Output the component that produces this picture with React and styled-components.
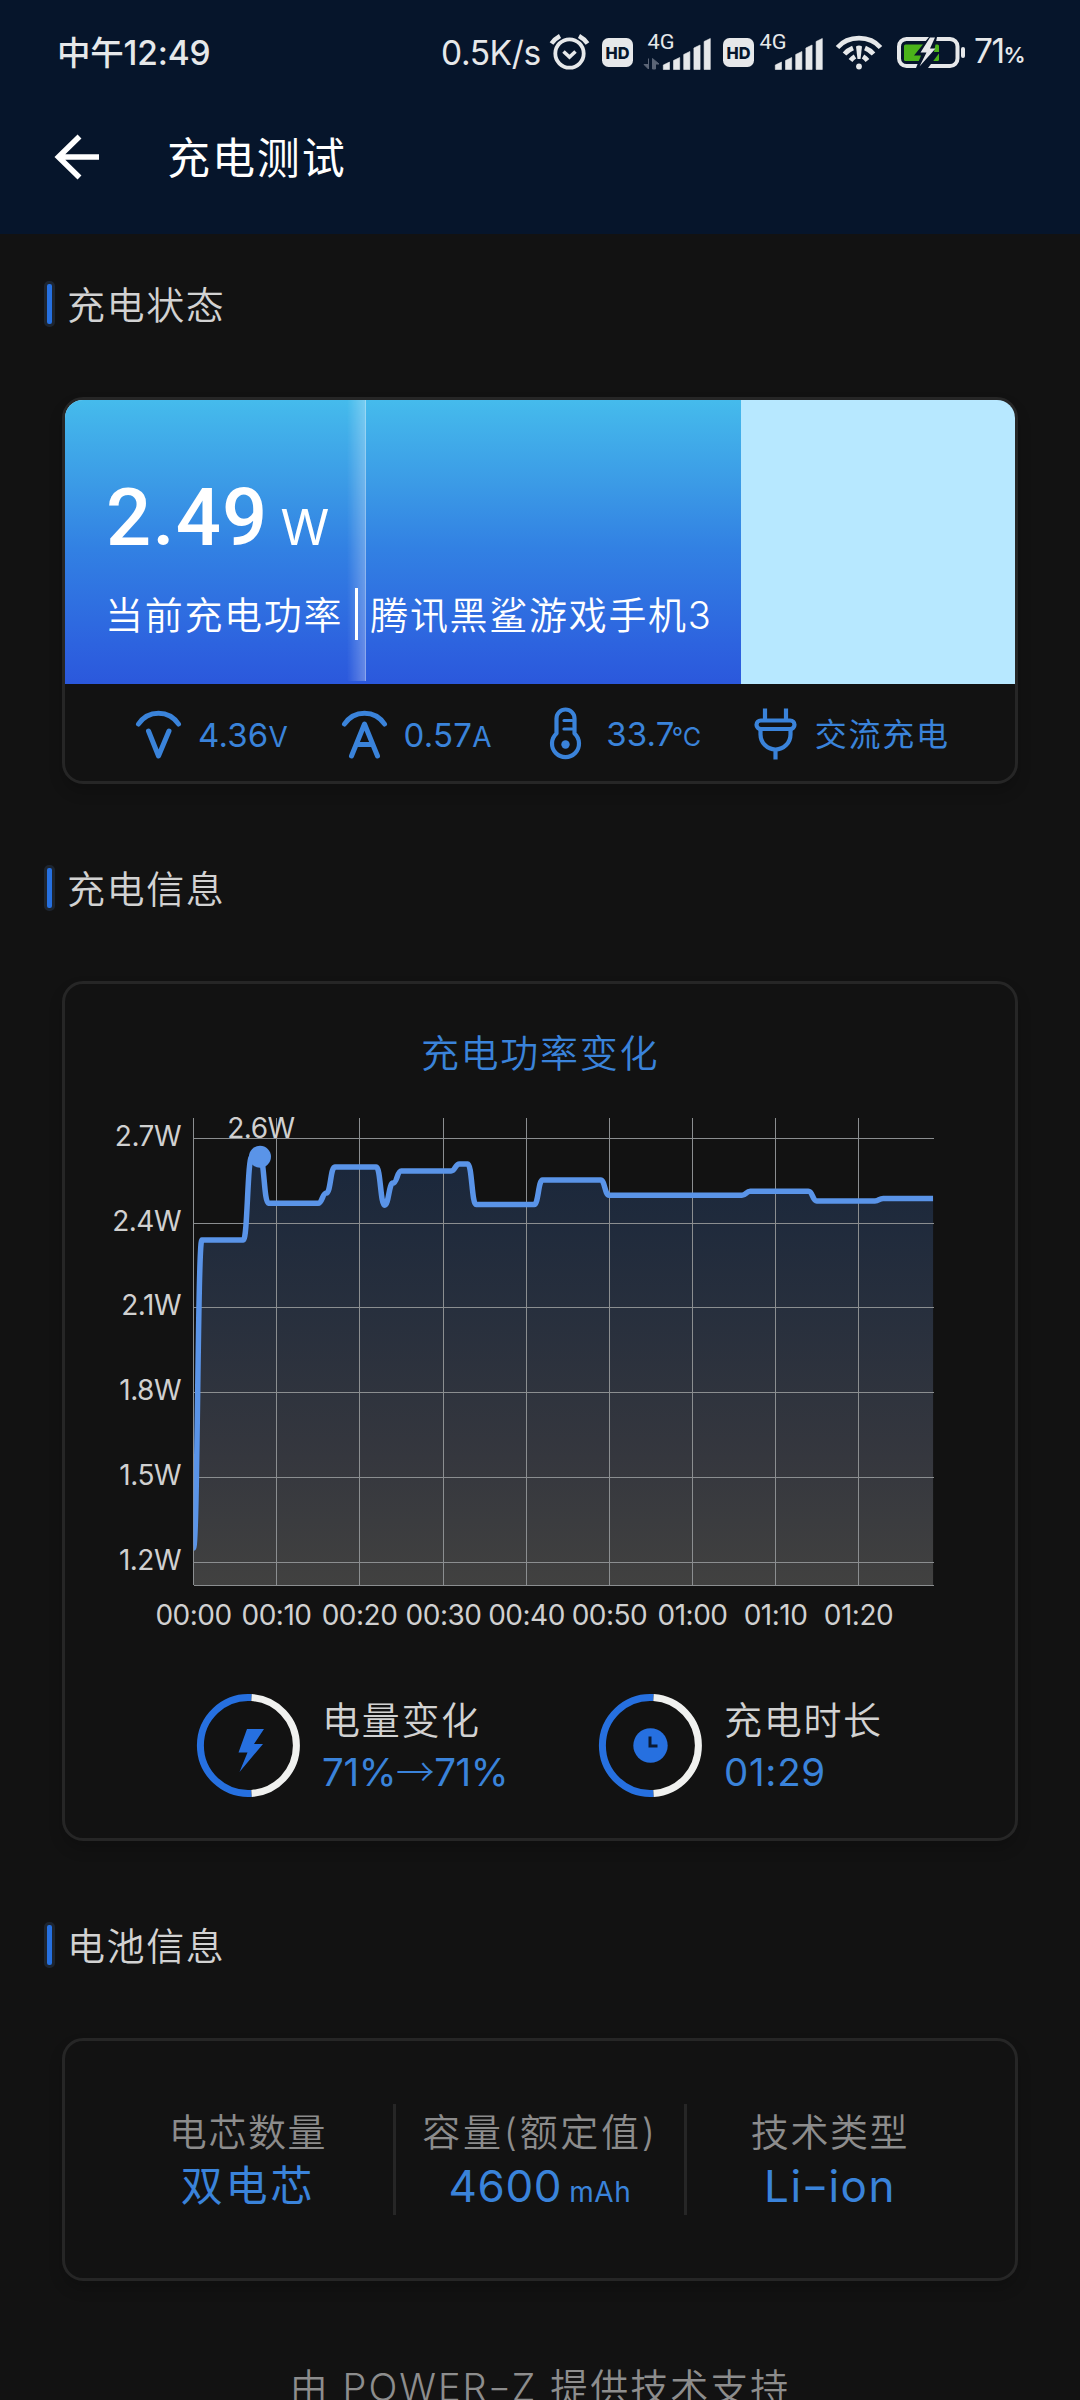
import React from 'react';
import styled, { createGlobalStyle } from 'styled-components';

const ink = '#e6e8ea';
const blue = '#3a83da';
const deepBlue = '#2670e0';

const GlobalStyle = createGlobalStyle`
  *,
  *::before {
    box-sizing: border-box;
  }

  body {
    margin: 0;
    background: #121212;
    font-family: Inter, 'Noto Sans CJK SC', sans-serif;
    color: #d2d2d2;
  }

  svg {
    display: block;
    flex: none;
    overflow: visible;
  }
`;

const Screen = styled.div`
  width: 1080px;
  height: 2400px;
  overflow: hidden;
  background: #121212;
`;

const Header = styled.header`
  height: 234px;
  background: #06152b;
`;

const StatusBar = styled.div`
  display: flex;
  align-items: center;
  height: 104px;
  padding: 0 47px 0 57px;
  font-size: 33.5px;
  line-height: 40px;
  color: ${ink};
`;

const Clock = styled.div`
  flex: 1;
  padding-top: 2px;
  font-weight: 450;
  letter-spacing: -0.2px;
  white-space: nowrap;
`;

const Speed = styled.div`
  width: 108px;
  padding-top: 1px;
  font-weight: 430;
  letter-spacing: -0.4px;
  white-space: nowrap;
`;

const StatusIcon = styled.div`
  width: ${(p) => p.$width}px;
  margin-right: ${(p) => p.$gap}px;
`;

const Percent = styled.div`
  width: 59px;
  padding-top: 1px;
  letter-spacing: -1.5px;
  white-space: nowrap;

  small {
    font-size: 22px;
    font-weight: 600;
  }
`;

const TitleBar = styled.div`
  display: flex;
  align-items: center;
  height: 106px;
  padding-left: 54px;
  gap: 66px;
`;

const Title = styled.h1`
  margin: 0;
  padding-top: 2px;
  font-size: 43px;
  font-weight: 400;
  line-height: 60px;
  letter-spacing: 1.9px;
  color: #fff;
`;

const Section = styled.section`
  padding: 47px 62px 0;

  & + & {
    padding-top: 81px;
  }
`;

const SectionTitle = styled.h2`
  display: flex;
  align-items: center;
  gap: 12px;
  height: 46px;
  margin: 0 0 70px -18px;
  font-size: 38px;
  font-weight: 350;
  line-height: 46px;
  letter-spacing: 1.6px;

  &::before {
    content: '';
    width: 11px;
    height: 46px;
    border: 3px solid #1d2530;
    border-radius: 5px;
    background: ${deepBlue};
  }

  span {
    padding-top: 2px;
  }
`;

const Card = styled.div`
  height: ${(p) => p.$height}px;
  border: 3px solid #262626;
  border-radius: 21px;
  overflow: hidden;
  box-shadow: 0 8px 14px rgba(0, 0, 0, 0.18);
`;

const PowerPanel = styled.div`
  position: relative;
  display: flex;
  flex-direction: column;
  height: 284px;
  padding: 71px 0 0 40px;
  background: #b7e8ff;
  color: #fff;
`;

const PowerFill = styled.div`
  position: absolute;
  top: 0;
  left: 0;
  bottom: 0;
  background: linear-gradient(#45bbec, #3b9ae6 30%, #3281e3 52%, #2d63df 86%, #2b58dc);
`;

const Shimmer = styled.div`
  position: absolute;
  top: 0;
  left: 282px;
  width: 19px;
  height: 281px;
  border-right: 1px solid rgba(255, 255, 255, 0.45);
  background: linear-gradient(90deg, rgba(255, 255, 255, 0), rgba(255, 255, 255, 0.27));
`;

const Power = styled.div`
  position: relative;
  display: flex;
  align-items: baseline;
  gap: 12px;
  height: 94px;
  padding-left: 1px;
  line-height: 94px;
  font-family: Roboto, sans-serif;
  font-size: 79.5px;
  font-weight: 500;
  letter-spacing: 1.2px;

  small {
    font-family: Inter, sans-serif;
    font-size: 49.5px;
    font-weight: 400;
  }
`;

const PowerCaption = styled.div`
  position: relative;
  display: flex;
  height: 52px;
  margin-top: 23px;
  font-size: 38px;
  font-weight: 350;
  line-height: 54px;
  letter-spacing: 1.7px;
  white-space: nowrap;

  span + span {
    height: 52px;
    margin-left: 12px;
    padding-left: 12px;
    border-left: 3px solid #fff;
  }
`;

const Metrics = styled.div`
  display: grid;
  grid-template-columns: repeat(4, 205.6px);
  align-items: center;
  height: 97px;
  padding: 2px 0 0 71px;
  color: ${blue};
`;

const Metric = styled.div`
  display: flex;
  align-items: center;
  gap: 16px;
  font-size: ${(p) => (p.$cjk ? 32 : 33)}px;
  font-weight: 370;
  line-height: 44px;
  letter-spacing: ${(p) => (p.$cjk ? 1.7 : 0.2)}px;
  white-space: nowrap;

  span {
    padding-top: ${(p) => (p.$cjk ? 2 : 4)}px;
  }

  small {
    margin-left: ${(p) => (p.$tight ? -3 : 0)}px;
    font-size: ${(p) => (p.$tight ? 25 : 28)}px;
  }
`;

const ChartTitle = styled.h3`
  margin: 41px 0 0;
  font-size: 38px;
  font-weight: 350;
  line-height: 56px;
  letter-spacing: 1.7px;
  text-align: center;
  color: ${blue};
`;

const Stats = styled.div`
  display: flex;
  padding-left: 132px;
  margin-top: 34px;
`;

const Stat = styled.div`
  display: flex;
  width: 402px;
  gap: 22px;
`;

const StatText = styled.div`
  font-size: 38px;
  font-weight: 350;
  line-height: 52px;
  letter-spacing: 1.7px;
  white-space: nowrap;
`;

const StatValue = styled.div`
  font-size: 38.5px;
  font-weight: 370;
  letter-spacing: ${(p) => p.$spacing}px;
  color: ${blue};

  span {
    font-family: 'Noto Sans CJK SC', sans-serif;
    font-weight: 300;
    line-height: 0;
  }
`;

const Specs = styled.div`
  display: grid;
  grid-template-columns: 290px 291px 289px;
  align-content: center;
  height: 100%;
  padding-left: 38px;
`;

const Spec = styled.div`
  height: 111px;
  padding-top: 1px;
  text-align: center;
  font-size: 38px;
  font-weight: 350;
  line-height: 54px;
  letter-spacing: ${(p) => p.$spacing || 1.6}px;
  white-space: nowrap;
  color: #8c8c8c;

  & + & {
    border-left: 3px solid #262626;
  }
`;

const SpecValue = styled.div`
  font-size: ${(p) => p.$size || 44}px;
  font-weight: 380;
  letter-spacing: ${(p) => p.$spacing || 0}px;
  color: ${blue};

  small {
    margin-left: 7px;
    font-size: 28px;
  }
`;

const Dash = styled.span`
  display: inline-block;
  margin: 0 2px;
  transform: scaleX(1.35);
`;

const Footer = styled.footer`
  margin-top: 78px;
  text-align: center;
  font-size: 38px;
  font-weight: 350;
  line-height: 56px;
  letter-spacing: 2px;
  white-space: nowrap;
  color: #8d8d8d;
`;

const AlarmIcon = () => (
  <svg width="41" height="38" viewBox="0 0 41 38" fill="none" stroke={ink}>
    <circle cx="20.5" cy="20.5" r="14.2" strokeWidth="3.8" />
    <path d="M14.5 18.5l6 5.5 6-5.5" strokeWidth="3.6" />
    <path d="M2.5 10.5Q5.5 6 11 3M38.5 10.5Q35.5 6 30 3" strokeWidth="4.4" />
  </svg>
);

const HdIcon = () => (
  <svg width="31" height="29" viewBox="0 0 31 29">
    <rect width="31" height="29" rx="6.5" fill={ink} />
    <text x="15.5" y="20.5" textAnchor="middle" textLength="24" lengthAdjust="spacingAndGlyphs" fontSize="16.5" fontWeight="800" fill="#06152b">
      HD
    </text>
  </svg>
);

const SignalIcon = ({ data }) => (
  <svg width="67" height="36" viewBox="0 0 67 36" fill={ink}>
    <text x="3.5" y="15" fontSize="20" textLength="27" lengthAdjust="spacingAndGlyphs" fontFamily="Roboto">
      4G
    </text>
    {[28, 23.5, 17.5, 11, 4.5].map((top, i) => (
      <path key={top} d={`M${19.3 + i * 10.2} 35.5V${top + 3}L${25.5 + i * 10.2} ${top}V35.5z`} stroke={ink} strokeWidth="0.6" strokeLinejoin="round" />
    ))}
    {data && <path d="M4.5 24.5V35L0 30.5H4.5M8.5 35V24.5L15 30H11.5V35z" fill="#5b6577" stroke="#5b6577" />}
  </svg>
);

const WifiIcon = () => (
  <svg width="46" height="36" viewBox="0 0 46 36" fill="none" stroke={ink}>
    <path d="M1.5 13.5C12 1 34 1 44.5 13.5" strokeWidth="4.6" />
    <path d="M8.5 20Q12 16 17 14M37.5 20Q34 16 29 14" strokeWidth="4.8" />
    <path d="M14.5 26.5Q16.5 24 19 22.5M31.5 26.5Q29.5 24 27 22.5" strokeWidth="4.8" />
    <path d="M20 12.5Q23 10.5 26 12.5L24.5 25H21.5z" fill={ink} stroke="none" />
    <circle cx="23" cy="32.5" r="2.9" fill={ink} stroke="none" />
  </svg>
);

const BatteryIcon = () => (
  <svg width="68" height="31" viewBox="0 0 68 31">
    <rect x="2" y="2" width="58.5" height="27" rx="7.5" fill="none" stroke={ink} strokeWidth="4" />
    <rect x="64" y="10" width="4" height="11" rx="2" fill={ink} />
    <rect x="7" y="7.5" width="35" height="16.5" rx="1.5" fill="#4bb31a" />
    <path d="M32 0L17 18.5H24L19 31H31L43 15H37L40 0z" fill="#06152b" />
    <path d="M33 0.5L23.5 15.5H29.5L22.5 29.5L38.5 11.5H33L38 0.5z" fill={ink} />
  </svg>
);

const BackIcon = () => (
  <svg width="47" height="46" viewBox="0 0 47 46" fill="none" stroke="#fff" strokeWidth="5.6">
    <path d="M45 23H6M25.5 2.5L4.5 23L25.5 43.5" />
  </svg>
);

const meter = { width: 46, height: 52, viewBox: '0 0 46 52', fill: 'none', stroke: blue, strokeLinecap: 'round', strokeLinejoin: 'round' };

const VoltIcon = () => (
  <svg {...meter} strokeWidth="5">
    <path d="M2.5 16C12 1.5 33 1.5 42.5 16" />
    <path d="M12.5 23L22.5 48L33 23" />
  </svg>
);

const AmpIcon = () => (
  <svg {...meter} strokeWidth="5">
    <path d="M2.5 16C12 1.5 33 1.5 42.5 16" />
    <path d="M9.5 48L22.5 16L35.5 48M15 36.5H30" />
  </svg>
);

const ThermoIcon = () => (
  <svg {...meter} width="43" viewBox="4 0 43 52" strokeWidth="4.2">
    <path d="M13.5 25.5V10.5a9 9 0 0 1 18 0V25.5a13.5 13.5 0 1 1-18 0z" />
    <path d="M21 12.5H29M21 21H29" strokeWidth="3.2" />
    <circle cx="22.5" cy="36.5" r="4.2" fill={blue} stroke="none" />
  </svg>
);

const PlugIcon = () => (
  <svg {...meter} strokeLinecap="butt" strokeWidth="4.2">
    <path d="M12 0.5V12M33 0.5V12M22.5 42V51.5" />
    <rect x="3.5" y="12.5" width="38" height="8.5" rx="4.2" />
    <path d="M7.5 22V26.5a15 15 0 0 0 30 0V22" />
  </svg>
);

const Ring = ({ children }) => (
  <svg width="103" height="103" viewBox="0 0 103 103" fill="none" strokeWidth="7">
    <path d="M54.5 3.6A48 48 0 1 0 54.5 99.4" stroke={deepBlue} />
    <path d="M54.5 3.6A48 48 0 0 1 54.5 99.4" stroke="#f0f1ef" />
    {children}
  </svg>
);

// [second, watt], straight where the value holds and eased where it changes
const samples = [
  [0, 1.251], [1, 2.341], [6, 2.341], [7, 2.635], [8, 2.635], [9, 2.471],
  [15, 2.471], [16, 2.507], [17, 2.599], [22, 2.599], [23, 2.464], [24, 2.542],
  [25, 2.585], [31, 2.585], [32, 2.61], [33, 2.61], [34, 2.466], [41, 2.466],
  [42, 2.553], [49, 2.553], [50, 2.499], [66, 2.499], [67, 2.513], [74, 2.513],
  [75, 2.479], [82, 2.479], [83, 2.488], [89, 2.488],
];

const left = 128.5;
const right = 868.5;
const px = (t) => left + t * 8.31;
const py = (w) => 452.5 - (w - 1.2) * 282.7;

const curve = samples
  .map(([t, w], i) => {
    if (i === 0) return `M${px(t)} ${py(w)}`;
    const [pt, pw] = samples[i - 1];
    const mid = px((t + pt) / 2);
    return `C${mid} ${py(pw)} ${mid} ${py(w)} ${px(t)} ${py(w)}`;
  })
  .join('');

const watts = [
  ['2.7W', 28.5], ['2.4W', 113.5], ['2.1W', 197.5],
  ['1.8W', 282.5], ['1.5W', 367.5], ['1.2W', 452.5],
];

const times = [
  ['00:00', 128.5], ['00:10', 211.5], ['00:20', 294.5], ['00:30', 378.5], ['00:40', 461.5],
  ['00:50', 544.5], ['01:00', 627.5], ['01:10', 710.5], ['01:20', 793.5],
];

const PowerChart = () => (
  <svg width="950" height="579" viewBox="0 -29 950 579" fontSize="28" fill="#d0d0d0">
    <defs>
      <linearGradient id="area" x1="0" y1="50" x2="0" y2="475" gradientUnits="userSpaceOnUse">
        <stop offset="0" stopColor="#1a273b" />
        <stop offset="0.35" stopColor="#272f3d" />
        <stop offset="0.7" stopColor="#35373e" />
        <stop offset="1" stopColor="#414140" />
      </linearGradient>
      <clipPath id="plot">
        <rect x={left} y="0" width={right - left} height="476" />
      </clipPath>
    </defs>
    <path d={`${curve}V475H${left}z`} fill="url(#area)" />
    <g stroke="#8b8e90" strokeWidth="1" shapeRendering="crispEdges">
      {watts.map(([label, y]) => (
        <path key={label} d={`M${left} ${y}H${right}`} />
      ))}
      {times.map(([label, x]) => (
        <path key={label} d={`M${x} 8V475`} />
      ))}
      <path d={`M${left} 475.5H${right}`} />
    </g>
    <path d={curve} fill="none" stroke="#5a94e8" strokeWidth="5.5" clipPath="url(#plot)" />
    <circle cx={px(8)} cy={py(2.635)} r="11" fill="#5a94e8" />
    <text x="196" y="28" textAnchor="middle" letterSpacing="-0.5">
      2.6W
    </text>
    {watts.map(([label, y]) => (
      <text key={label} x="116" y={y + 7.5} textAnchor="end" letterSpacing="-0.5">
        {label}
      </text>
    ))}
    {times.map(([label, x]) => (
      <text key={label} x={x} y="515" textAnchor="middle" letterSpacing="-0.5">
        {label}
      </text>
    ))}
  </svg>
);

const App = () => (
  <>
    <GlobalStyle />
    <Screen>
      <Header>
        <StatusBar>
          <Clock>中午12:49</Clock>
          <Speed>0.5K/s</Speed>
          <StatusIcon $width={41} $gap={12}>
            <AlarmIcon />
          </StatusIcon>
          <StatusIcon $width={31} $gap={11}>
            <HdIcon />
          </StatusIcon>
          <StatusIcon $width={67} $gap={11.5}>
            <SignalIcon data />
          </StatusIcon>
          <StatusIcon $width={31} $gap={2.5}>
            <HdIcon />
          </StatusIcon>
          <StatusIcon $width={67} $gap={13}>
            <SignalIcon />
          </StatusIcon>
          <StatusIcon $width={46} $gap={15}>
            <WifiIcon />
          </StatusIcon>
          <StatusIcon $width={68} $gap={9}>
            <BatteryIcon />
          </StatusIcon>
          <Percent>
            71<small>%</small>
          </Percent>
        </StatusBar>
        <TitleBar>
          <BackIcon />
          <Title>充电测试</Title>
        </TitleBar>
      </Header>

      <Section>
        <SectionTitle>
          <span>充电状态</span>
        </SectionTitle>
        <Card $height={387}>
          <PowerPanel>
            <PowerFill style={{ width: '71.15%' }} />
            <Shimmer />
            <Power>
              2.49<small>W</small>
            </Power>
            <PowerCaption>
              <span>当前充电功率</span>
              <span>腾讯黑鲨游戏手机3</span>
            </PowerCaption>
          </PowerPanel>
          <Metrics>
            <Metric>
              <VoltIcon />
              <span>4.36<small>V</small></span>
            </Metric>
            <Metric>
              <AmpIcon />
              <span>0.57<small>A</small></span>
            </Metric>
            <Metric $tight>
              <ThermoIcon />
              <span>33.7<small>℃</small></span>
            </Metric>
            <Metric $cjk>
              <PlugIcon />
              <span>交流充电</span>
            </Metric>
          </Metrics>
        </Card>
      </Section>

      <Section>
        <SectionTitle>
          <span>充电信息</span>
        </SectionTitle>
        <Card $height={860}>
          <ChartTitle>充电功率变化</ChartTitle>
          <PowerChart />
          <Stats>
            <Stat>
              <Ring>
                <path d="M50 35H67L57 50H66L42.5 78L50.5 58.5H41.5z" fill={deepBlue} />
              </Ring>
              <StatText>
                电量变化
                <StatValue $spacing={-0.4}>71%<span>→</span>71%</StatValue>
              </StatText>
            </Stat>
            <Stat>
              <Ring>
                <circle cx="51.5" cy="51.5" r="17.2" fill={deepBlue} />
                <path d="M51 42.5V52H58.5" stroke="#0b1a33" strokeWidth="3" />
              </Ring>
              <StatText>
                充电时长
                <StatValue $spacing={0.7}>01:29</StatValue>
              </StatText>
            </Stat>
          </Stats>
        </Card>
      </Section>

      <Section>
        <SectionTitle>
          <span>电池信息</span>
        </SectionTitle>
        <Card $height={243}>
          <Specs>
            <Spec>
              电芯数量
              <SpecValue $size={42} $spacing={2.8}>双电芯</SpecValue>
            </Spec>
            <Spec $spacing={2.7}>
              容量(额定值)
              <SpecValue $spacing={0.6}>4600<small>mAh</small></SpecValue>
            </Spec>
            <Spec>
              技术类型
              <SpecValue $spacing={1.5}>Li<Dash>-</Dash>ion</SpecValue>
            </Spec>
          </Specs>
        </Card>
        <Footer>由 POWER<Dash>-</Dash>Z 提供技术支持</Footer>
      </Section>
    </Screen>
  </>
);

export default App;
